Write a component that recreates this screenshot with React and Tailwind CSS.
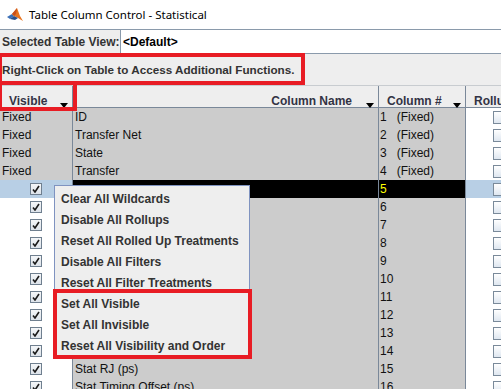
import React from "react";

const rows = [
  { vis: "Fixed", name: "ID", num: "1   (Fixed)" },
  { vis: "Fixed", name: "Transfer Net", num: "2   (Fixed)" },
  { vis: "Fixed", name: "State", num: "3   (Fixed)" },
  { vis: "Fixed", name: "Transfer", num: "4   (Fixed)" },
  { vis: "check", name: "", num: "5", selected: true },
  { vis: "check", name: "", num: "6" },
  { vis: "check", name: "", num: "7" },
  { vis: "check", name: "", num: "8" },
  { vis: "check", name: "", num: "9" },
  { vis: "check", name: "", num: "10" },
  { vis: "check", name: "", num: "11" },
  { vis: "check", name: "", num: "12" },
  { vis: "check", name: "", num: "13" },
  { vis: "check", name: "", num: "14" },
  { vis: "check", name: "Stat RJ (ps)", num: "15" },
  { vis: "check", name: "Stat Timing Offset (ps)", num: "16" },
];

const menu = [
  "Clear All Wildcards",
  "Disable All Rollups",
  "Reset All Rolled Up Treatments",
  "Disable All Filters",
  "Reset All Filter Treatments",
  "Set All Visible",
  "Set All Invisible",
  "Reset All Visibility and Order",
];

const Arrow = () => (
  <svg width="8" height="5" viewBox="0 0 8 5" className="absolute right-[4px] bottom-[2px]">
    <polygon points="0,0 8,0 4,5" fill="#000" />
  </svg>
);

const Check = () => (
  <div className="w-[12px] h-[12px] border border-[#6f7f8f] bg-gradient-to-b from-[#f4f6f8] to-[#dde3ea] flex items-center justify-center">
    <svg width="8" height="8" viewBox="0 0 8 8">
      <path d="M1 4.5 L3 7 L7 1" stroke="#1a1a1a" strokeWidth="1.6" fill="none" />
    </svg>
  </div>
);

const Logo = () => (
  <svg width="16" height="16" viewBox="0 0 16 16">
    <polygon points="0,10 5,7 7,9 3,12" fill="#3b6fb6" />
    <polygon points="5,7 10,1 13,9 16,14 11,11 7,9" fill="#e8741f" />
    <polygon points="5,7 10,1 9,7 7,9" fill="#c9501a" />
    <polygon points="3,12 7,9 11,11 8,13" fill="#2a4f8a" />
  </svg>
);

const App = () => {
  return (
    <div className="relative w-[501px] h-[389px] overflow-hidden bg-[#f0f0f0] text-[12px] font-['Liberation_Sans',Arial,sans-serif]">
      {/* Title bar */}
      <div className="h-[29px] bg-white flex items-center pl-[7px] gap-[6px]">
        <Logo />
        <span className="text-[11.5px] text-black font-['Noto_Sans',sans-serif]">Table Column Control - Statistical</span>
      </div>

      {/* Selected view */}
      <div className="h-[25px] flex border-t border-[#8a9aab] bg-[#eeeeee]">
        <div className="w-[120px] pl-[2px] flex items-center font-bold text-[#333]">Selected Table View:</div>
        <div className="flex-1 bg-white border-l border-b border-[#8a9aab] flex items-center pl-[2px] font-bold text-black">&lt;Default&gt;</div>
      </div>

      {/* Message */}
      <div className="h-[31px] flex items-center pl-[2px] bg-[#eeeeee] font-bold text-[11.7px] text-[#333]">
        Right-Click on Table to Access Additional Functions.
      </div>

      {/* Header */}
      <div className="grid grid-cols-[73px_306px_87px_1fr] h-[23px] bg-[#eeeeee] border-b border-[#7a8899] border-t border-t-[#c8ccd0] font-bold text-[#333344]">
        <div className="relative border-r border-[#7a8899] pl-[9px] pt-[6px]">Visible<Arrow /></div>
        <div className="relative border-r border-[#7a8899] text-right pr-[26px] pt-[6px]">Column Name<Arrow /></div>
        <div className="relative border-r border-[#7a8899] pl-[8px] pt-[6px]">Column #<Arrow /></div>
        <div className="pl-[8px] pt-[6px] whitespace-nowrap overflow-hidden">Rollu</div>
      </div>

      {/* Rows */}
      {rows.map((r, i) => (
        <div key={i} className="grid grid-cols-[73px_306px_87px_1fr] h-[18px] text-[#111]">
          <div
            className={`border-r border-b border-[#7a8899] flex items-center ${
              r.vis === "Fixed" ? "bg-[#cccccc] pl-[2px]" : r.selected ? "bg-[#b8cfe5] justify-center" : "bg-white justify-center"
            }`}
          >
            {r.vis === "Fixed" ? "Fixed" : <Check />}
          </div>
          <div className={`border-r border-b border-[#7a8899] flex items-center pl-[2px] whitespace-nowrap ${r.selected ? "bg-black" : "bg-[#cccccc]"}`}>
            {r.name}
          </div>
          <div className={`border-r border-b border-[#7a8899] flex items-center pl-[1px] whitespace-pre ${r.selected ? "bg-black text-[#ffff00]" : "bg-[#cccccc]"}`}>
            {r.num}
          </div>
          <div className={`border-b border-[#7a8899] flex items-center pl-[27px] overflow-hidden ${r.selected ? "bg-[#b8cfe5]" : "bg-white"}`}>
            <div className="w-[13px] h-[13px] shrink-0 border border-[#7a8a9a] bg-gradient-to-b from-white to-[#dfe7f0]" />
          </div>
        </div>
      ))}

      {/* Context menu */}
      <div className="absolute left-[54px] top-[185px] w-[196px] h-[173px] bg-[#eeeeee] border border-[#7f93c0] pt-[2px] font-bold text-[#333]">
        {menu.map((m) => (
          <div key={m} className="h-[21px] flex items-center pl-[6px] whitespace-nowrap">{m}</div>
        ))}
      </div>

      {/* Red annotation boxes */}
      <div className="absolute left-[-2px] top-[53px] w-[307px] h-[32px] border-[4px] border-[#e81c24] pointer-events-none" />
      <div className="absolute left-[-2px] top-[81px] w-[79px] h-[30px] border-[4px] border-[#e81c24] pointer-events-none" />
      <div className="absolute left-[53px] top-[289px] w-[199px] h-[70px] border-[4px] border-[#e81c24] pointer-events-none" />
    </div>
  );
};

export default App;
